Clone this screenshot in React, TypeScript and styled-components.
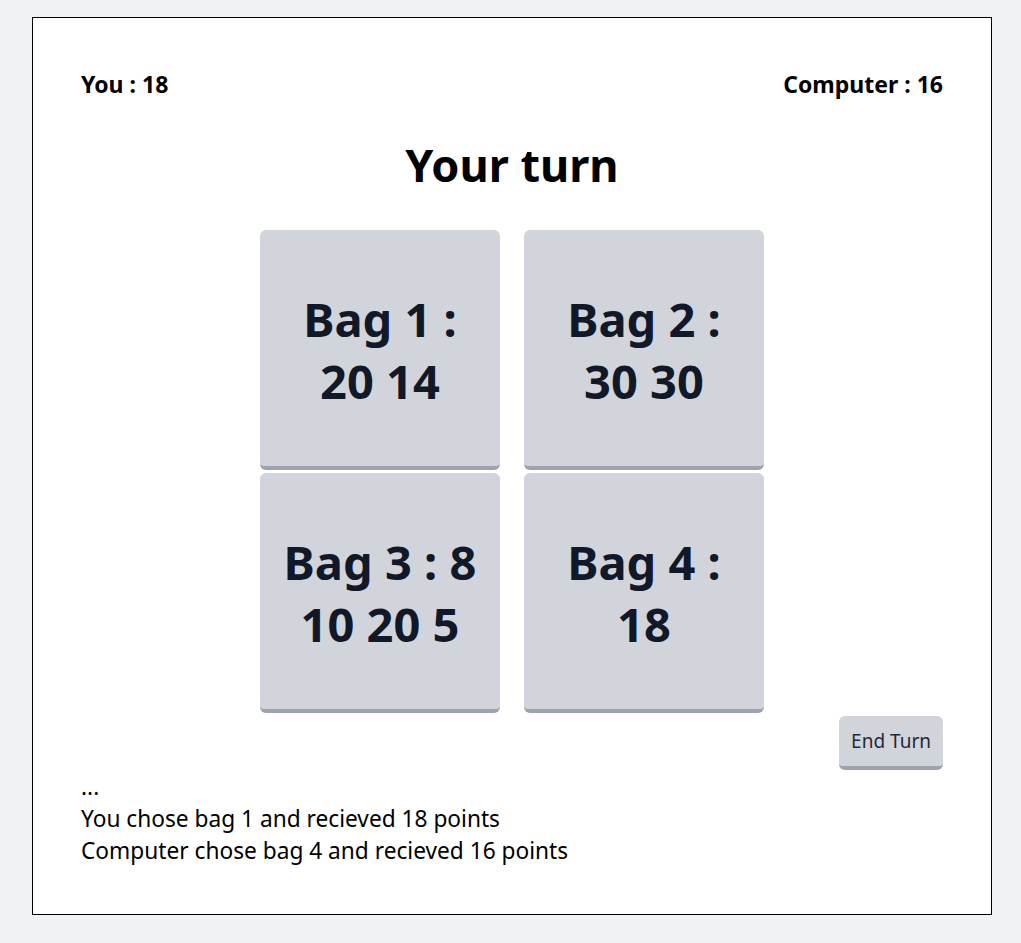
import React from "react";
import styled, { createGlobalStyle } from "styled-components";

const GlobalStyle = createGlobalStyle`
  html, body { margin: 0; padding: 0; }
  body {
    background: #f0f2f5;
    font-family: "Noto Sans", "Open Sans", sans-serif;
    color: #000;
  }
  * { box-sizing: border-box; }
`;

const Page = styled.div`
  padding: 17px 29px 28px 32px;
`;

const Board = styled.div`
  width: 960px;
  min-height: 898px;
  background: #fff;
  border: 1px solid #000;
  padding: 50px 48px 44px;
`;

const ScoreRow = styled.div`
  display: flex;
  justify-content: space-between;
  font-size: 23px;
  font-weight: 700;
  line-height: 32px;
`;

const Title = styled.h1`
  margin: 34px 0 34px;
  text-align: center;
  font-size: 45px;
  font-weight: 700;
  line-height: 62px;
`;

const BagGrid = styled.div`
  display: grid;
  grid-template-columns: repeat(2, 240px);
  column-gap: 24px;
  row-gap: 3px;
  justify-content: center;
`;

const Bag = styled.button`
  width: 240px;
  height: 240px;
  border: none;
  border-bottom: 4px solid #9ca3af;
  border-radius: 6px;
  background: #d1d5db;
  color: #111827;
  font-family: inherit;
  font-size: 47px;
  font-weight: 700;
  line-height: 62px;
  padding: 4px 14px 0;
  text-align: center;
  cursor: pointer;
`;

const Actions = styled.div`
  display: flex;
  justify-content: flex-end;
  margin-top: 3px;
`;

const EndButton = styled.button`
  height: 54px;
  padding: 0 12px;
  border: none;
  border-bottom: 4px solid #9ca3af;
  border-radius: 6px;
  background: #d1d5db;
  color: #1f2937;
  font-family: inherit;
  font-size: 19px;
  line-height: 24px;
  cursor: pointer;
`;

const Log = styled.div`
  margin-top: 1px;
  font-size: 22.7px;
  line-height: 32px;
`;

const bags = [
  { id: 1, items: [20, 14] },
  { id: 2, items: [30, 30] },
  { id: 3, items: [8, 10, 20, 5] },
  { id: 4, items: [18] },
];

export default function App() {
  return (
    <>
      <GlobalStyle />
      <Page>
        <Board>
          <ScoreRow>
            <span>You : 18</span>
            <span>Computer : 16</span>
          </ScoreRow>
          <Title>Your turn</Title>
          <BagGrid>
            {bags.map((b) => (
              <Bag key={b.id}>
                Bag {b.id} : {b.items.join(" ")}
              </Bag>
            ))}
          </BagGrid>
          <Actions>
            <EndButton>End Turn</EndButton>
          </Actions>
          <Log>
            <div>...</div>
            <div>You chose bag 1 and recieved 18 points</div>
            <div>Computer chose bag 4 and recieved 16 points</div>
          </Log>
        </Board>
      </Page>
    </>
  );
}
